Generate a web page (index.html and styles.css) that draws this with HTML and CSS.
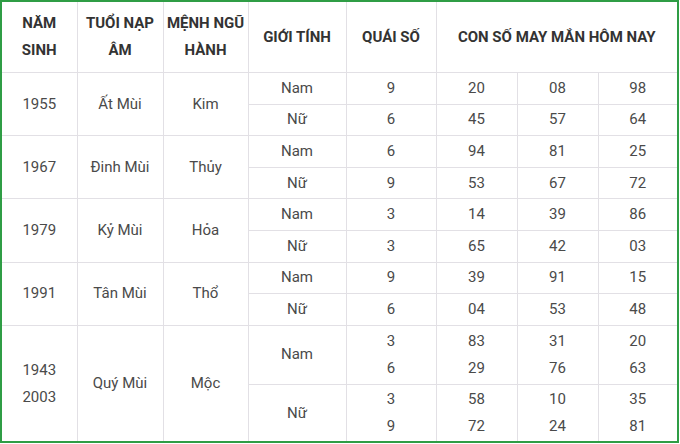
FILE: index.html
```html
<!DOCTYPE html>
<html lang="vi">
<head>
<meta charset="utf-8">
<title>Con số may mắn tuổi Mùi</title>
<link rel="stylesheet" href="styles.css">
</head>
<body>
<div class="frame">
<table class="lucky">
  <colgroup>
    <col class="c1"><col class="c2"><col class="c3"><col class="c4"><col class="c5"><col class="c6"><col class="c7"><col class="c8">
  </colgroup>
  <thead>
    <tr class="head">
      <th>NĂM<br>SINH</th>
      <th>TUỔI NẠP<br>ÂM</th>
      <th>MỆNH NGŨ<br>HÀNH</th>
      <th>GIỚI TÍNH</th>
      <th>QUÁI SỐ</th>
      <th colspan="3">CON SỐ MAY MẮN HÔM NAY</th>
    </tr>
  </thead>
  <tbody>
    <tr class="r a"><td rowspan="2">1955</td><td rowspan="2">Ất Mùi</td><td rowspan="2">Kim</td><td>Nam</td><td>9</td><td>20</td><td>08</td><td>98</td></tr>
    <tr class="r b"><td>Nữ</td><td>6</td><td>45</td><td>57</td><td>64</td></tr>
    <tr class="r a grp"><td rowspan="2">1967</td><td rowspan="2">Đinh Mùi</td><td rowspan="2">Thủy</td><td>Nam</td><td>6</td><td>94</td><td>81</td><td>25</td></tr>
    <tr class="r b"><td>Nữ</td><td>9</td><td>53</td><td>67</td><td>72</td></tr>
    <tr class="r a grp"><td rowspan="2">1979</td><td rowspan="2">Kỷ Mùi</td><td rowspan="2">Hỏa</td><td>Nam</td><td>3</td><td>14</td><td>39</td><td>86</td></tr>
    <tr class="r b"><td>Nữ</td><td>3</td><td>65</td><td>42</td><td>03</td></tr>
    <tr class="r a grp"><td rowspan="2">1991</td><td rowspan="2">Tân Mùi</td><td rowspan="2">Thổ</td><td>Nam</td><td>9</td><td>39</td><td>91</td><td>15</td></tr>
    <tr class="r b"><td>Nữ</td><td>6</td><td>04</td><td>53</td><td>48</td></tr>
    <tr class="tall grp"><td rowspan="2">1943<br>2003</td><td rowspan="2">Quý Mùi</td><td rowspan="2">Mộc</td><td>Nam</td><td>3<br>6</td><td>83<br>29</td><td>31<br>76</td><td>20<br>63</td></tr>
    <tr class="tall2"><td>Nữ</td><td>3<br>9</td><td>58<br>72</td><td>10<br>24</td><td>35<br>81</td></tr>
  </tbody>
</table>
</div>
</body>
</html>
```
FILE: styles.css
```css
html, body {
  margin: 0;
  padding: 0;
  background: #ffffff;
}

.frame {
  box-sizing: border-box;
  width: 679px;
  height: 443px;
  border: 2px solid #2f9d45;
  overflow: hidden;
}

.lucky {
  width: 675px;
  border-collapse: collapse;
  table-layout: fixed;
  font-family: Roboto, "Liberation Sans", sans-serif;
  font-size: 15px;
  color: #4a4a4a;
}

.c1 { width: 75px; }
.c2 { width: 86px; }
.c3 { width: 85px; }
.c4 { width: 98px; }
.c5 { width: 90px; }
.c6 { width: 81px; }
.c7 { width: 81px; }
.c8 { width: 79px; }

.lucky th,
.lucky td {
  border: 1px solid #e2e0e5;
  text-align: center;
  vertical-align: middle;
  padding: 0 2px;
  line-height: 27px;
}

.lucky tr > :first-child { border-left: none; }
.lucky tr > :last-child { border-right: none; }

.head th {
  border-top: none;
  height: 70px;
  font-weight: 700;
  color: #333333;
  line-height: 27px;
}

.r td { height: 30.6px; }
.grp td { border-top: 1px solid #dcdadf; }
.tall td { height: 58px; }
.tall2 td { height: 57px; border-bottom: none; }
```
